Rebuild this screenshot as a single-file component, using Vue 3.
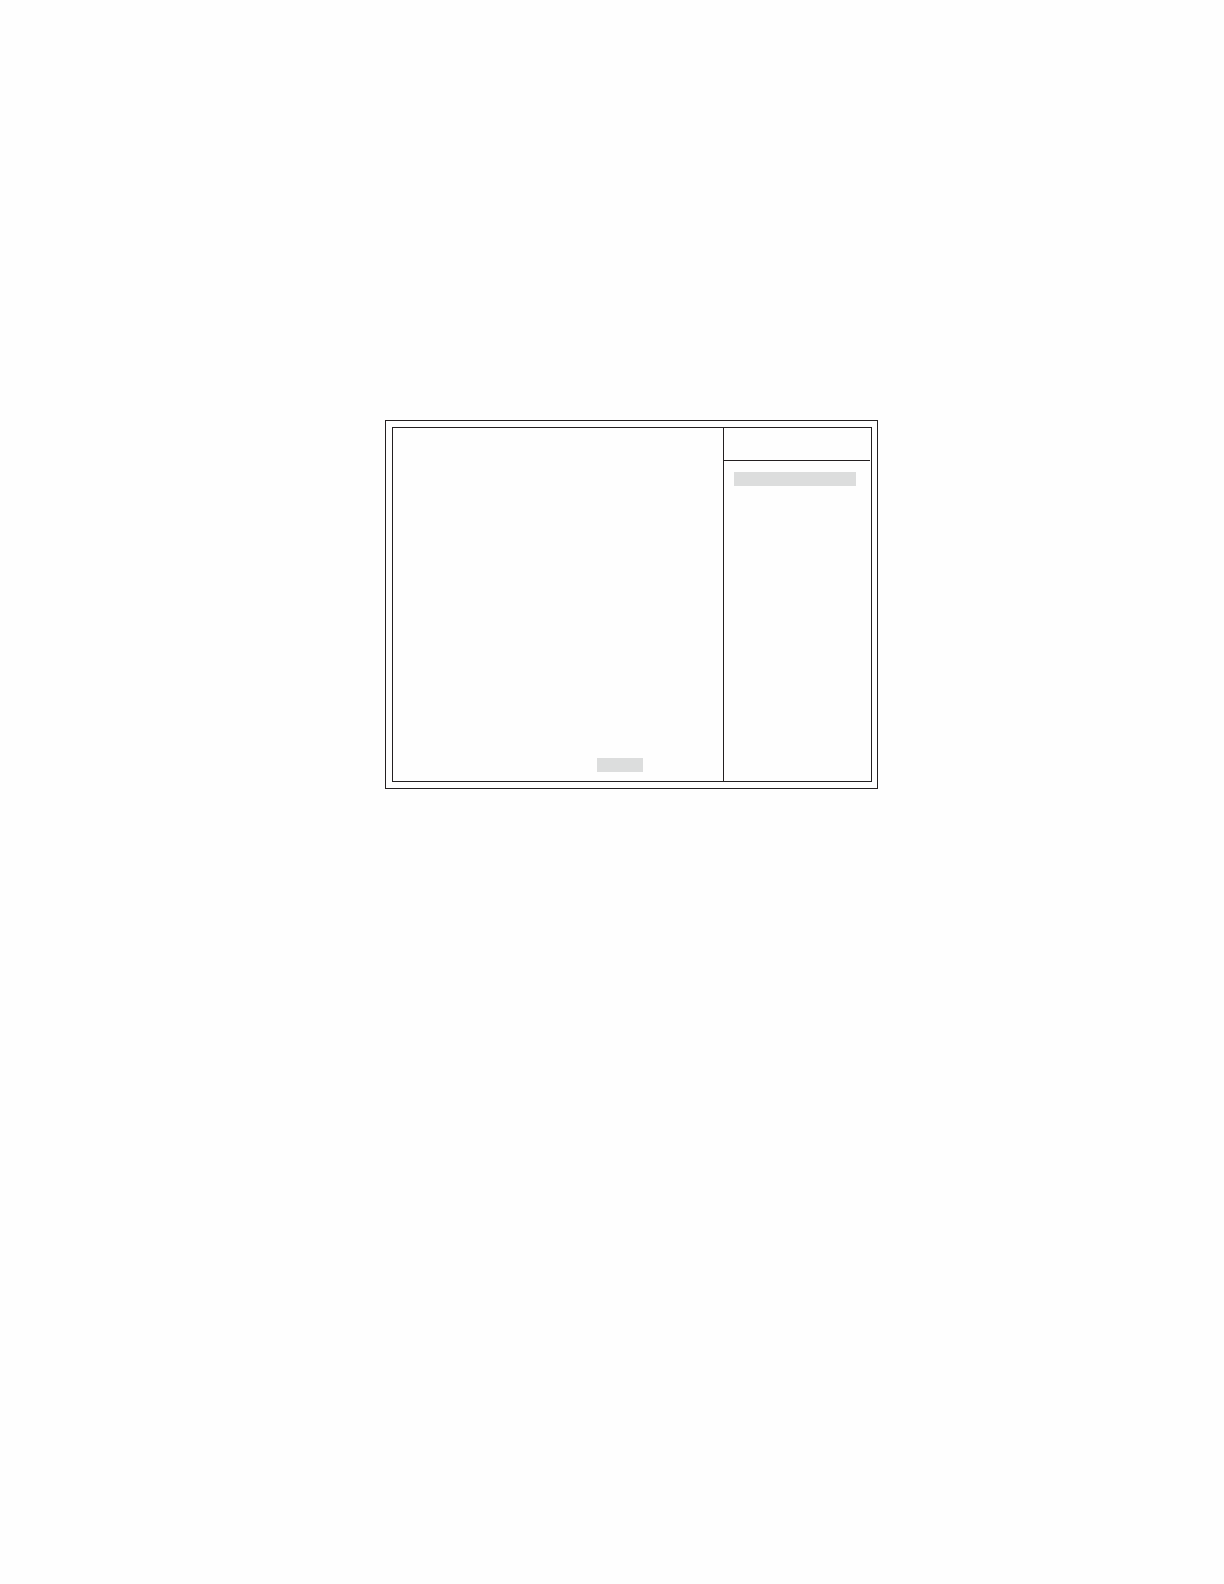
<script setup>
import { ref } from "vue";

const fieldSelected = ref(true);
const itemSelected = ref(true);
</script>

<template>
  <main class="page">
    <section class="screen">
      <div class="screen__frame">
        <div class="screen__content">
          <div v-if="fieldSelected" class="highlight highlight--field"></div>
        </div>
        <aside class="screen__menu">
          <header class="screen__menu-header"></header>
          <div class="screen__menu-body">
            <div v-if="itemSelected" class="highlight"></div>
          </div>
        </aside>
      </div>
    </section>
  </main>
</template>

<style>
body {
  background: #fefefe;
}
</style>

<style scoped>
.page {
  --color-line: #231f20;
  --color-highlight: #dcdddd;

  box-sizing: border-box;
  min-height: 100vh;
  padding: 420px 346px 64px 385px;
}

.screen {
  padding: 6px 5px 6px 6px;
  border: 1px solid var(--color-line);
}

.screen__frame {
  display: grid;
  grid-template-columns: 1fr 148px;
  min-height: 353px;
  border: 1px solid var(--color-line);
}

.screen__content {
  display: flex;
  align-items: flex-end;
  justify-content: flex-end;
  padding: 0 80px 9px 0;
}

.screen__menu {
  border-left: 1px solid var(--color-line);
}

.screen__menu-header {
  height: 32px;
  margin-right: 1px;
  border-bottom: 1px solid var(--color-line);
}

.screen__menu-body {
  padding: 11px 15px 11px 10px;
}

.highlight {
  height: 14px;
  background: var(--color-highlight);
}

.highlight--field {
  width: 46px;
}
</style>
